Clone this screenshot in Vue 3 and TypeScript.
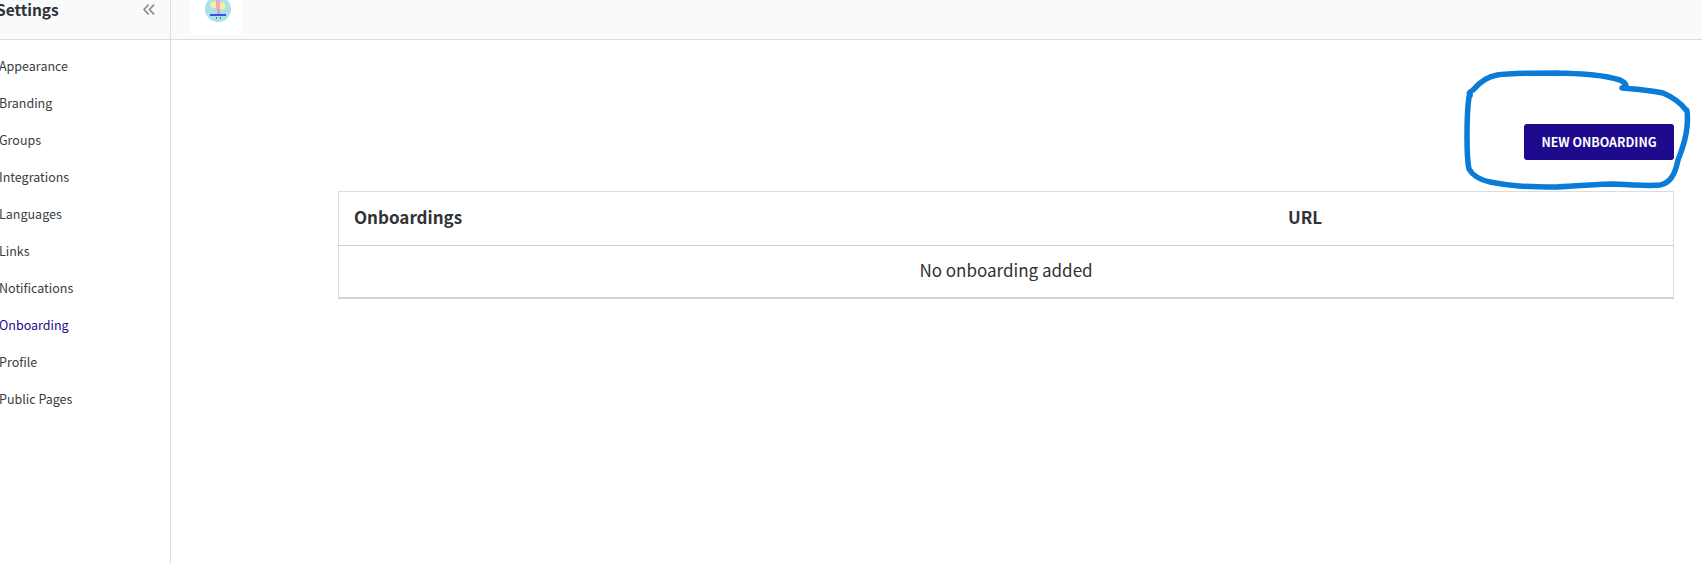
<template>
  <div class="settings-page">
    <aside class="sidebar">
      <div class="sidebar-head">
        <span class="sidebar-title">Settings</span>
        <svg class="collapse-icon" width="12" height="11" viewBox="0 0 12 11" fill="none">
          <path d="M5.5 0.6 L1 5.5 L5.5 10.4 M11 0.6 L6.5 5.5 L11 10.4" stroke="#8a8a8a" stroke-width="1.6" />
        </svg>
      </div>
      <nav class="sidebar-nav">
        <a
          v-for="item in menuItems"
          :key="item"
          class="nav-item"
          :class="{ active: item === activeItem }"
        >
          {{ item }}
        </a>
      </nav>
    </aside>

    <div class="main">
      <header class="topbar">
        <div class="logo-box">
          <!-- tiny brand logo, cropped by the top of the page -->
          <svg width="26" height="23" viewBox="0 0 26 23">
            <circle cx="13" cy="9" r="13" fill="#a9e2e9" />
            <circle cx="9" cy="5" r="3.5" fill="#f4ef9a" />
            <circle cx="17" cy="6" r="3.5" fill="#f4ef9a" />
            <rect x="11" y="0" width="4" height="9" fill="#f3a9b4" />
            <rect x="12" y="9" width="3" height="5" fill="#c9a0dc" />
            <rect x="5" y="14" width="16" height="2" fill="#3c53e0" />
            <rect x="11" y="17" width="1" height="2" fill="#6b7a8a" />
            <rect x="15" y="17" width="1" height="2" fill="#6b7a8a" />
          </svg>
        </div>
      </header>

      <section class="content">
        <div class="actions">
          <button class="new-btn">NEW ONBOARDING</button>
        </div>
        <table class="onboarding-table">
          <thead>
            <tr>
              <th class="name-col">Onboardings</th>
              <th>URL</th>
            </tr>
          </thead>
          <tbody>
            <tr>
              <td colspan="2">No onboarding added</td>
            </tr>
          </tbody>
        </table>
      </section>
    </div>

    <!-- hand-drawn highlight sitting on top of the screenshot -->
    <svg class="scribble" width="1702" height="564" viewBox="0 0 1702 564" fill="none">
      <path
        d="M1622 88 C1630 86 1624 82 1620 80 C1600 74 1580 74 1557 73 C1530 73 1510 73 1497 75 C1485 77 1478 84 1473 90 C1465 95 1473 93 1469 97 C1467 110 1467 125 1467 137 C1467 150 1467 160 1469 169 C1473 176 1480 180 1490 182 C1510 186 1525 187 1557 187 C1580 186 1600 184 1613 184 C1630 185 1650 186 1660 185 C1670 183 1675 175 1678 160 C1682 150 1686 140 1687 127 C1688 115 1687 108 1686 110 C1680 102 1670 96 1663 93 C1650 90 1635 89 1622 88 Z"
        stroke="#0a7bd6"
        stroke-width="5.5"
        stroke-linejoin="round"
      />
    </svg>
  </div>
</template>

<script setup lang="ts">
const menuItems: string[] = [
  'Appearance',
  'Branding',
  'Groups',
  'Integrations',
  'Languages',
  'Links',
  'Notifications',
  'Onboarding',
  'Profile',
  'Public Pages',
];

const activeItem = 'Onboarding';
</script>

<style>
html,
body {
  margin: 0;
  background: #ffffff;
  overflow: hidden;
}
</style>

<style scoped>
.settings-page {
  position: relative;
  display: flex;
  width: 1702px;
  height: 564px;
  overflow: hidden;
  font-family: "Noto Sans CJK SC", "Noto Sans", sans-serif;
  color: #2f3237;
}

.sidebar {
  width: 170px;
  flex-shrink: 0;
  border-right: 1px solid #dcdcdc;
}

.sidebar-head {
  display: flex;
  align-items: flex-start;
  justify-content: space-between;
  height: 40px;
  box-sizing: border-box;
  padding: 0 15px 0 0;
  background: #fafafa;
  border-bottom: 1px solid #dcdcdc;
}

.sidebar-title {
  margin-left: -4px;
  margin-top: -4px;
  font-size: 15.5px;
  line-height: 26px;
  font-weight: 600;
}

.collapse-icon {
  margin-top: 4px;
}

.sidebar-nav {
  display: flex;
  flex-direction: column;
  padding-top: 7px;
}

.nav-item {
  height: 37px;
  line-height: 37px;
  margin-left: -1px;
  font-size: 12.5px;
  color: #3a3d42;
}

.nav-item.active {
  color: #1e0a8c;
}

.main {
  flex: 1;
  min-width: 0;
}

.topbar {
  height: 40px;
  box-sizing: border-box;
  padding-left: 20px;
  background: #fafafa;
  border-bottom: 1px solid #dcdcdc;
}

.logo-box {
  display: flex;
  justify-content: center;
  width: 50px;
  height: 35px;
  background: #ffffff;
}

.logo-box svg {
  margin-left: 4px;
}

.content {
  padding: 84px 28px 0 167px;
}

.actions {
  display: flex;
  justify-content: flex-end;
  margin-bottom: 31px;
}

.new-btn {
  width: 150px;
  height: 36px;
  border: none;
  border-radius: 3px;
  background: #1e0a8c;
  color: #ffffff;
  font-family: inherit;
  font-size: 12.4px;
  font-weight: 700;
  padding: 0 0 1px;
}

.onboarding-table {
  width: 100%;
  border-collapse: collapse;
  box-sizing: border-box;
  border: 1px solid #dcdcdc;
  border-bottom: 2px solid #d4d4d4;
  font-size: 17px;
}

.onboarding-table th {
  height: 54px;
  padding: 0 15px 4px;
  box-sizing: border-box;
  text-align: left;
  font-weight: 700;
  border-bottom: 1px solid #cfcfcf;
}

.onboarding-table .name-col {
  width: 70%;
}

.onboarding-table td {
  height: 52px;
  padding: 0 0 3px;
  box-sizing: border-box;
  text-align: center;
}

.scribble {
  position: absolute;
  top: 0;
  left: 0;
  pointer-events: none;
}
</style>
